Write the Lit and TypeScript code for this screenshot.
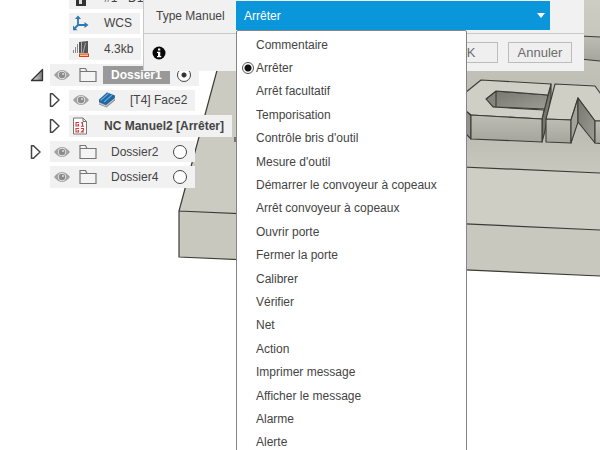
import { LitElement, html, svg, css, nothing } from "lit";
import { customElement, state } from "lit/decorators.js";
import { classMap } from "lit/directives/class-map.js";

const OPTIONS = [
  "Commentaire", "Arrêter", "Arrêt facultatif", "Temporisation",
  "Contrôle bris d'outil", "Mesure d'outil", "Démarrer le convoyeur à copeaux",
  "Arrêt convoyeur à copeaux", "Ouvrir porte", "Fermer la porte", "Calibrer",
  "Vérifier", "Net", "Action", "Imprimer message", "Afficher le message",
  "Alarme", "Alerte",
];

@customElement("model-view")
class ModelView extends LitElement {
  static styles = css`
    :host { display: block; }
    .scene { display: block; width: 100%; height: 100%; }
    .edge { fill: none; stroke: #3c3c37; stroke-width: 1.2; stroke-linejoin: round; }
    .face { stroke: #3c3c37; stroke-width: 1.1; stroke-linejoin: round; }
    .top { fill: #cfcfc6; }
  `;
  render() {
    return html`<svg class="scene" viewBox="0 0 600 450" preserveAspectRatio="xMinYMin slice" aria-hidden="true">
      <defs>
        <linearGradient id="plate" x1="0" y1="0" x2="0" y2="1">
          <stop offset="0" stop-color="#cdcdc4" /><stop offset=".45" stop-color="#c0c0b7" />
          <stop offset=".8" stop-color="#bebeb5" /><stop offset="1" stop-color="#c8c8bf" />
        </linearGradient>
        <linearGradient id="front" x1="0" y1="0" x2="0" y2="1">
          <stop offset="0" stop-color="#bdbdb4" /><stop offset="1" stop-color="#a5a59d" />
        </linearGradient>
        <linearGradient id="wall" x1="0" y1="0" x2="1" y2="1">
          <stop offset="0" stop-color="#77776f" /><stop offset="1" stop-color="#9c9c93" />
        </linearGradient>
      </defs>
      <path d="M236 0 L600 0 L600 276 L179 257 L179 211 Z" fill="#cbcbc2" />
      <path d="M467 0H600V173L467 167Z" fill="url(#plate)" />
      <path d="M467 167L600 173V230L467 224Z" fill="#cecec5" />
      <path d="M179 211L600 230V276L179 257Z" fill="#c8c8bf" />
      <path d="M580 36L600 37V61L580 59Z" fill="url(#front)" />
      <path class="edge" d="M236 0L179 211V257L600 276M179 211L600 230M440 166L600 173M580 36L600 37M580 59L600 61M235 137V142" />
      <path class="face" fill="url(#wall)" d="M496 91L548 95L546 109L493 107Z" />
      <path class="face" fill="#85857c" d="M486 99L496 91V107H493Z" />
      <path class="face" fill="#77776f" d="M551 84V97L545 131L542 142V119Z" />
      <path class="face" fill="#93938b" d="M460 104L471 116V139L460 128Z" />
      <path class="face top" d="M460 97L481 80L551 84L548 95L496 91L486 99L493 107L544 110L542 119L471 115L460 106Z" />
      <path class="face" fill="url(#front)" d="M471 115L542 119V142L471 139Z" />
      <path class="face top" d="M555 84L595 86L606 101V121H595L578 98L571 120L546 119Z" />
      <path class="face" fill="url(#front)" d="M546 119L571 120V143L546 142Z" />
      <path class="face" fill="#a3a39b" d="M578 98L571 120V143L578 122Z" />
      <path class="face" fill="url(#wall)" d="M578 98L595 121V143L578 122Z" />
      <path class="face" fill="url(#front)" d="M595 121H606V144L595 143Z" />
    </svg>`;
  }
}

const icons = {
  open: svg`<svg width="14" height="14" viewBox="0 0 14 14"><defs><linearGradient id="tri"><stop offset="0" stop-color="#eee"/><stop offset="1" stop-color="#777"/></linearGradient></defs><path d="M12.500 1.500V12.500H1.500Z" fill="url(#tri)" stroke="#333" stroke-width="1.300" stroke-linejoin="round"/></svg>`,
  closed: svg`<svg width="12" height="16" viewBox="0 0 12 16"><path d="M1.500 1.800V14.200H3.500L10 8L3.500 1.800Z" fill="#fff" stroke="#444" stroke-width="1.500" stroke-linejoin="round"/></svg>`,
  eye: svg`<svg width="18" height="14" viewBox="0 0 18 14"><path d="M1 7Q9-3 17 7Q9 17 1 7Z" fill="#a0a0a0"/><circle cx="9" cy="7" r="4.200" fill="#e4e4e4"/><circle cx="9" cy="7" r="3.200" fill="#8c8c8c"/><circle cx="10" cy="6" r="1" fill="#ddd"/></svg>`,
  folder: svg`<svg width="18" height="16" viewBox="0 0 18 16"><path d="M1 14.500V1.500H6.500L8 4.500H17V14.500ZM1 4.500H8" fill="#f4f4f4" stroke="#777" stroke-width="1.200"/></svg>`,
  wcs: svg`<svg width="18" height="16" viewBox="0 0 18 16"><path d="M6 3V10H13M6 10L3 13" fill="none" stroke="#2b79b5" stroke-width="1.800"/><path d="M3 4L6 0.500L9 4ZM12.500 7L16.500 10L12.500 13ZM1 10.500V15.200H5.500Z" fill="#2b79b5"/></svg>`,
  size: svg`<svg width="18" height="18" viewBox="0 0 18 18"><path d="M1.500 10V13M3.500 7V13M5.500 4V13" stroke="#888" stroke-width="1"/><path d="M7 2L16 1V13H7Z" fill="#555"/><path d="M9.500 2V13M13.500 3L11 13" stroke="#aaa" stroke-width="1"/><rect x="7.500" y="14" width="9" height="2.500" fill="#ffc38f" stroke="#d3401f"/></svg>`,
  tool: svg`<svg width="18" height="18" viewBox="0 0 18 18"><path d="M4 0H14V17H4Z" fill="#333"/><path d="M7 0H10V15H7Z" fill="#ddd"/></svg>`,
  face: svg`<svg width="18" height="16" viewBox="0 0 18 16"><path d="M1 9L9 .5L17 4.500V8.500L8.500 15.500L1 12.500Z" fill="#8d9499"/><path d="M1 7.500L9 .5L17 3.500L16.500 6L8 13L1 10Z" fill="#1f669f"/><path d="M2.500 8.500L10.500 1.500M6 10L14 3" fill="none" stroke="#5fa5d9" stroke-width="1.400"/><path d="M1 11L8 14L17 6.500" fill="none" stroke="#d5dde2" stroke-width=".8"/></svg>`,
  nc: svg`<svg width="16" height="18" viewBox="0 0 16 18"><path d="M1.500 1H11L14.500 4.500V17H1.500ZM11 1V4.500H14.500" fill="#fff" stroke="#777"/><g fill="none" stroke="#d93a3a" stroke-width="1.100"><path d="M7 5.500H4V9H6.500V7.500H5.500M9 6L10.500 5.500V9.500M9 9.300H12"/><path d="M7 11.500H4V15H6.500V13.500H5.500M9 11.500H11.500V13L9.500 15H12"/></g></svg>`,
};

type IconName = keyof typeof icons;
interface Row {
  label: string; level: 1 | 2; toggle?: IconName; eye?: boolean; icon: IconName;
  bold?: boolean; selected?: boolean; radio?: boolean; checked?: boolean;
}

const ROWS: Row[] = [
  { label: "#1 - D1", level: 2, icon: "tool" },
  { label: "WCS", level: 2, icon: "wcs" },
  { label: "4.3kb", level: 2, icon: "size" },
  { label: "Dossier1", level: 1, toggle: "open", eye: true, icon: "folder", bold: true, selected: true, radio: true, checked: true },
  { label: "[T4] Face2", level: 2, toggle: "closed", eye: true, icon: "face" },
  { label: "NC Manuel2 [Arrêter]", level: 2, toggle: "closed", icon: "nc", bold: true },
  { label: "Dossier2", level: 1, toggle: "closed", eye: true, icon: "folder", radio: true },
  { label: "Dossier4", level: 1, eye: true, icon: "folder", radio: true },
];

@customElement("browser-tree")
class BrowserTree extends LitElement {
  static styles = css`
    :host { display: block; }
    .tree { list-style: none; margin: 0; padding: 0; height: 201px; display: grid; grid-auto-rows: 1fr; row-gap: 4px; }
    .row { display: flex; align-items: stretch; padding-left: 30px; }
    .row.deep { padding-left: 49px; }
    .toggle { width: 20px; flex: none; display: flex; align-items: center; padding: 0; border: 0; background: none; }
    .bar { display: flex; align-items: center; background: #f1f1f1; padding: 0 8px 0 3px; }
    .eye { display: flex; width: 26px; padding: 0; border: 0; background: none; }
    .icon { display: flex; width: 24px; }
    .deep .icon { width: 32px; }
    .label { padding: 0 8px; color: #444; white-space: nowrap; line-height: 18px; }
    .deep .label { padding: 0; }
    .bold { font-weight: bold; }
    .selected { background: #999; color: #fff; }
    .radio { appearance: none; box-sizing: border-box; width: 14px; height: 14px; margin: 0 0 0 7px; border: 1px solid #444; border-radius: 50%; background: #fff; }
    .radio:checked { background: radial-gradient(circle, #333 2px, #fff 3px); }
  `;
  render() {
    return html`<ul class="tree">${ROWS.map((r) => html`
      <li class=${classMap({ row: true, deep: r.level === 2 })}>
        ${r.toggle
          ? html`<button class="toggle" aria-label=${"Développer " + r.label}>${icons[r.toggle]}</button>`
          : html`<span class="toggle"></span>`}
        <div class="bar">
          ${r.eye ? html`<button class="eye" aria-label=${"Visibilité " + r.label}>${icons.eye}</button>` : nothing}
          <span class="icon">${icons[r.icon]}</span>
          <span class=${classMap({ label: true, bold: !!r.bold, selected: !!r.selected })}>${r.label}</span>
          ${r.radio ? html`<input class="radio" type="radio" name="active" aria-label=${r.label} ?checked=${!!r.checked}>` : nothing}
        </div>
      </li>`)}</ul>`;
  }
}

@customElement("manual-dialog")
class ManualDialog extends LitElement {
  @state() private value = "Arrêter";

  static styles = css`
    :host { display: block; color: #444; }
    .dialog { background: #f1f1f1; border-left: 1px solid #c8c8c8; }
    .field { display: flex; align-items: center; padding: 1px 34px 3px 12px; border-bottom: 1px solid #c8c8c8; }
    .name { width: 80px; flex: none; white-space: nowrap; }
    .combo { position: relative; flex: 1; display: flex; align-items: center; }
    .select { appearance: none; width: 100%; height: 29px; margin: 0; padding: 0 8px; border: 0; border-radius: 0; background: #0a96db; color: #fff; font: inherit; }
    .arrow { position: absolute; right: 5px; width: 8px; height: 5px; pointer-events: none; }
    .menu { position: absolute; top: 100%; left: 0; box-sizing: border-box; width: 231px; margin: 0; padding: 2px 5px; border: 1px solid #858585; border-radius: 2px; background: #fff; }
    .list { display: grid; grid-auto-rows: 1fr; height: 421px; }
    .option { display: flex; align-items: center; gap: 2px; white-space: nowrap; }
    .mark { appearance: none; box-sizing: border-box; width: 12px; height: 12px; margin: 0; border-radius: 50%; }
    .mark:checked { border: 1px solid #555; background: radial-gradient(circle, #111 3px, #fff 4px); }
    .footer { display: flex; align-items: center; gap: 10px; padding: 8px 12px; }
    .info { display: flex; margin: 0 auto 0 -4px; padding: 0; border: 0; background: none; }
    .button { box-sizing: border-box; width: 64px; height: 21px; padding: 0; border: 1px solid #bcbcbc; background: #efefef; color: #6c6c6c; font: 13px "Liberation Sans", Arial, sans-serif; }
  `;
  render() {
    return html`<div class="dialog">
      <div class="field">
        <label class="name" for="type">Type Manuel</label>
        <div class="combo">
          <select class="select" id="type" .value=${this.value}
            @change=${(e: Event) => (this.value = (e.target as HTMLSelectElement).value)}>
            ${OPTIONS.map((o) => html`<option ?selected=${o === this.value}>${o}</option>`)}
          </select>
          <svg class="arrow" viewBox="0 0 8 5" aria-hidden="true"><path d="M0 0H8L4 5Z" fill="#fff" /></svg>
          <div class="menu" role="radiogroup" aria-label="Type Manuel">
            <div class="list">${OPTIONS.map((o) => html`
              <label class="option"><input class="mark" type="radio" name="kind" .checked=${o === this.value}
                @change=${() => (this.value = o)}>${o}</label>`)}
            </div>
          </div>
        </div>
      </div>
      <div class="footer">
        <button class="info" aria-label="Informations">
          <svg width="14" height="14" viewBox="0 0 14 14"><circle cx="7" cy="7" r="6.500" fill="#080808" /><path d="M6 2.500H8.300V4.500H6ZM5 5.700H8.300V10H9.300V11.300H5V10H6V7H5Z" fill="#fff" /></svg>
        </button>
        <button class="button">OK</button>
        <button class="button">Annuler</button>
      </div>
    </div>`;
  }
}

@customElement("app-root")
class AppRoot extends LitElement {
  static styles = css`
    :host { display: block; position: relative; height: 100vh; overflow: hidden; background: #fff; font: 12px "Liberation Sans", Arial, sans-serif; }
    .model { position: absolute; inset: 0; }
    .tree { position: relative; margin-top: -13px; }
    .dialog { position: absolute; top: 0; left: 143px; right: 16px; }
    .page { display: flow-root; }
  `;
  render() {
    return html`<main class="page">
      <model-view class="model"></model-view>
      <browser-tree class="tree"></browser-tree>
      <manual-dialog class="dialog"></manual-dialog>
    </main>`;
  }
}
